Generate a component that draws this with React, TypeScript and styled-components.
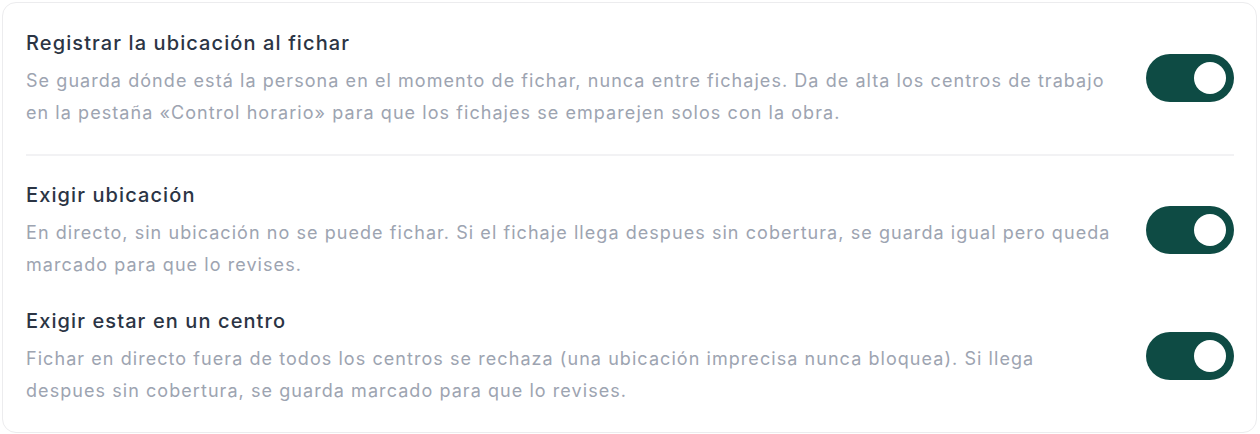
import React from "react";
import styled, { createGlobalStyle } from "styled-components";

const Global = createGlobalStyle`
  html, body { margin: 0; padding: 0; background: #ffffff; }
  body { font-family: Inter, "Noto Sans", "Liberation Sans", sans-serif; }
  * { box-sizing: border-box; }
`;

const Page = styled.div`
  padding: 2px 3px 1px 2px;
`;

const Card = styled.div`
  border: 1px solid #ececee;
  border-radius: 14px;
  background: #ffffff;
  padding: 24px 22px 25px 23px;
  display: flex;
  flex-direction: column;
`;

const Row = styled.div<{ $gapAfter?: number }>`
  display: flex;
  align-items: center;
  justify-content: space-between;
  gap: 34px;
  margin-bottom: ${(p) => p.$gapAfter ?? 0}px;
`;

const Texts = styled.div`
  display: flex;
  flex-direction: column;
  flex: 1;
  min-width: 0;
`;

const Title = styled.div`
  font-size: 20px;
  line-height: 32px;
  font-weight: 500;
  color: #2b3444;
  letter-spacing: 1.1px;
`;

const Desc = styled.div`
  font-size: 18px;
  line-height: 32px;
  color: #9da4b1;
  letter-spacing: 1.06px;
  margin-top: 6px;
`;

const Divider = styled.div`
  height: 2px;
  background: #f2f2f4;
  margin: 25px 0 23px;
`;

const Toggle = styled.button<{ $on: boolean }>`
  flex: none;
  width: 88px;
  height: 48px;
  border-radius: 24px;
  border: none;
  padding: 0 8px;
  background: ${(p) => (p.$on ? "#0e4b44" : "#d1d5db")};
  display: flex;
  align-items: center;
  justify-content: ${(p) => (p.$on ? "flex-end" : "flex-start")};
  cursor: pointer;
`;

const Knob = styled.span`
  width: 32px;
  height: 32px;
  border-radius: 50%;
  background: #ffffff;
`;

type Item = { title: string; desc: string };

const items: Item[] = [
  {
    title: "Registrar la ubicación al fichar",
    desc:
      "Se guarda dónde está la persona en el momento de fichar, nunca entre fichajes. Da de alta los centros de trabajo en la pestaña «Control horario» para que los fichajes se emparejen solos con la obra.",
  },
  {
    title: "Exigir ubicación",
    desc:
      "En directo, sin ubicación no se puede fichar. Si el fichaje llega despues sin cobertura, se guarda igual pero queda marcado para que lo revises.",
  },
  {
    title: "Exigir estar en un centro",
    desc:
      "Fichar en directo fuera de todos los centros se rechaza (una ubicación imprecisa nunca bloquea). Si llega despues sin cobertura, se guarda marcado para que lo revises.",
  },
];

export default function App() {
  const [on, setOn] = React.useState([true, true, true]);
  const flip = (i: number) => setOn((s) => s.map((v, j) => (j === i ? !v : v)));
  return (
    <>
      <Global />
      <Page>
        <Card>
          <Row>
            <Texts>
              <Title>{items[0].title}</Title>
              <Desc>{items[0].desc}</Desc>
            </Texts>
            <Toggle $on={on[0]} onClick={() => flip(0)} aria-label={items[0].title}>
              <Knob />
            </Toggle>
          </Row>
          <Divider />
          <Row $gapAfter={24}>
            <Texts>
              <Title>{items[1].title}</Title>
              <Desc>{items[1].desc}</Desc>
            </Texts>
            <Toggle $on={on[1]} onClick={() => flip(1)} aria-label={items[1].title}>
              <Knob />
            </Toggle>
          </Row>
          <Row>
            <Texts>
              <Title>{items[2].title}</Title>
              <Desc>{items[2].desc}</Desc>
            </Texts>
            <Toggle $on={on[2]} onClick={() => flip(2)} aria-label={items[2].title}>
              <Knob />
            </Toggle>
          </Row>
        </Card>
      </Page>
    </>
  );
}
